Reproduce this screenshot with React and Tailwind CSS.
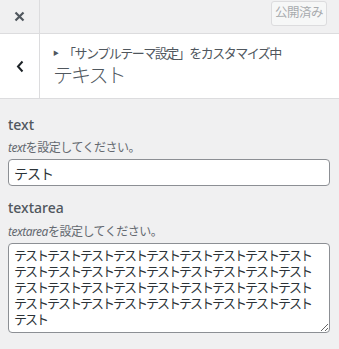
const FONT = "font-['Noto_Sans','Noto_Sans_CJK_JP',sans-serif]";

const areaText = Array(4)
  .fill('テスト'.repeat(9))
  .concat('テスト')
  .join('\n');

export default function App() {
  return (
    <div className={`w-[339px] h-[349px] overflow-hidden bg-[#f0f0f1] ${FONT}`}>
      {/* top bar */}
      <div className="flex h-[34px] border-b border-[#dcdcde] bg-[#f0f0f1]">
        <div className="w-[40px] border-r border-[#dcdcde] flex items-center justify-center">
          <svg width="11" height="11" viewBox="0 0 11 11">
            <path d="M1.5 1.5l8 8M9.5 1.5l-8 8" stroke="#50575e" strokeWidth="2.2" />
          </svg>
        </div>
        <div className="flex-1" />
        <div className="mr-[12px] mt-[1px] h-[25px] w-[56px] rounded-[3px] border border-[#dcdcde] bg-[#f6f7f7] flex items-center justify-center text-[12.5px] tracking-[-0.5px] text-[#a7aaad]">
          公開済み
        </div>
      </div>

      {/* section header */}
      <div className="flex h-[65px] bg-white border-b border-[#dcdcde]">
        <div className="w-[40px] border-r border-[#dcdcde] flex items-center justify-center">
          <svg width="8" height="13" viewBox="0 0 8 13">
            <path d="M6.5 1.5L2 6.5l4.5 5" stroke="#1d2327" strokeWidth="2" fill="none" />
          </svg>
        </div>
        <div className="pl-[13px] pt-[10px]">
          <div className="flex items-center text-[13px] leading-[18px] text-[#50575e] tracking-[-1.5px]">
            <span className="text-[6px] mr-[4px] tracking-normal">▶</span>
            「サンプルテーマ設定」をカスタマイズ中
          </div>
          <div className="mt-[1px] text-[20px] leading-[26px] text-[#50575e] tracking-[-2px] font-light">
            テキスト
          </div>
        </div>
      </div>

      {/* controls */}
      <div className="px-[8px] pt-[16px]">
        <div className="text-[14px] leading-[20px] font-medium text-[#50575e]">text</div>
        <div className="mt-[5px] text-[12px] leading-[16px] text-[#646970] tracking-[-0.5px]">
          <i>text</i>を設定してください。
        </div>
        <input
          type="text"
          defaultValue="テスト"
          className="mt-[3px] block w-[322px] h-[27px] rounded-[4px] border border-[#8c8f94] bg-white px-[5px] text-[14px] tracking-[-1px] text-[#2c3338] outline-none"
        />

        <div className="mt-[12px] text-[14px] leading-[20px] font-medium text-[#50575e]">textarea</div>
        <div className="mt-[6px] text-[12px] leading-[16px] text-[#646970] tracking-[-0.5px]">
          <i>textarea</i>を設定してください。
        </div>
        <textarea
          defaultValue={areaText}
          className="mt-[3px] block w-[322px] h-[90px] rounded-[4px] border border-[#8c8f94] bg-white px-[5px] py-[3px] text-[13px] leading-[16px] tracking-[-2px] text-[#2c3338] outline-none overflow-hidden"
        />
      </div>
    </div>
  );
}
